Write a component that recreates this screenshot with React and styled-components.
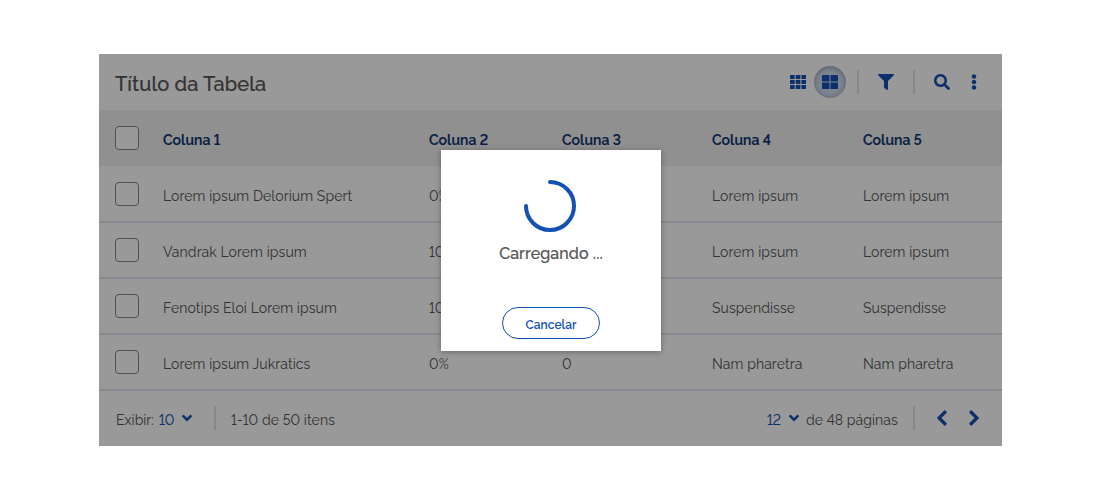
import React from 'react';
import styled, { createGlobalStyle, css } from 'styled-components';
import { FaFilter, FaSearch, FaEllipsisV, FaAngleDown } from 'react-icons/fa';

const GlobalStyle = createGlobalStyle`
  * { box-sizing: border-box; }
  body {
    margin: 0;
    background: #fff;
    color: #555;
    font: 14px/20px Raleway, Lato, "Open Sans", sans-serif;
    font-variant-numeric: lining-nums;
  }
`;

const Page = styled.main`
  height: 500px;
  padding: 54px 98px 54px 99px;
  overflow: hidden;
`;

const Panel = styled.section`
  position: relative;
  height: 392px;
  background: #fff;
`;

const Bar = styled.header`
  display: flex;
  align-items: center;
  height: 56px;
  padding: 0 12px 0 16px;
`;

const Label = styled.span`
  white-space: nowrap;
  letter-spacing: ${(p) => p.$spacing || 0}px;
`;

const Title = styled.h1`
  margin: 4px auto 0 0;
  font-size: 20px;
  font-weight: 500;
  line-height: 28px;
  -webkit-text-stroke: 0.2px currentColor;
`;

const IconButton = styled.button`
  display: flex;
  align-items: center;
  justify-content: center;
  width: 32px;
  height: 32px;
  padding: 0;
  border: 0;
  border-radius: 50%;
  background: none;
  color: #1351b4;
  font-size: 16px;
  ${(p) => p.$active && css`
    background: #d3dff2;
    box-shadow: inset 0 1px 6px rgba(0, 0, 0, 0.32);
  `}
`;

const Glyph = styled.svg`
  width: ${(p) => p.$width || 16}px;
  height: 16px;
  fill: currentColor;
`;

const Divider = styled.span`
  flex: none;
  width: 2px;
  height: 24px;
  margin: ${(p) => p.$margin};
  background: #e3e3e3;
`;

const Row = styled.div`
  display: grid;
  grid-template-columns: 48px 266px 133px 150px 151px 1fr;
  align-items: center;
  height: 56px;
  padding-left: 16px;
  box-shadow: 0 1px #dde5ee, inset 0 -1px #dde5ee;
`;

const HeadRow = styled(Row)`
  background: #f0f0f0;
  box-shadow: none;
  color: #0c326f;
  font-weight: 600;
  -webkit-text-stroke: 0.2px currentColor;
`;

const Checkbox = styled.span`
  width: 24px;
  height: 24px;
  border: 1px solid #888;
  border-radius: 4px;
  background: #fff;
`;

const Cell = styled(Label)`
  padding-top: 4px;
`;

const Footer = styled.footer`
  display: flex;
  align-items: center;
  height: 56px;
  padding: 0 12px 0 17px;
`;

const FooterText = styled(Label)`
  width: ${(p) => p.$width}px;
  padding-top: 4px;
`;

const PageSelect = styled.span`
  display: flex;
  align-items: center;
  justify-content: space-between;
  width: 34px;
  margin-right: ${(p) => p.$gap || 0}px;
  color: #1351b4;
  -webkit-text-stroke: 0.15px currentColor;

  svg { font-size: 16px; margin-right: ${(p) => (p.$gap ? -1 : -2)}px; }
`;

const Spacer = styled.span`
  flex: 1;
`;

const Scrim = styled.div`
  position: absolute;
  inset: 0;
  background: rgba(0, 0, 0, 0.4);
`;

const Dialog = styled.div`
  position: absolute;
  top: 96px;
  left: 342px;
  display: flex;
  flex-direction: column;
  align-items: center;
  width: 220px;
  height: 201px;
  padding-top: 30px;
  background: #fff;
  box-shadow: 0 1px 6px rgba(0, 0, 0, 0.32);
`;

const Spinner = styled.svg`
  display: block;
  width: 52px;
  height: 52px;
  margin-right: 2px;
  fill: none;
  stroke: #1351b4;
  stroke-width: 4;
  stroke-linecap: round;
`;

const Message = styled.p`
  margin: 10px 0 0;
  font-size: 16px;
  font-weight: 500;
  line-height: 24px;
  -webkit-text-stroke: 0.2px currentColor;
`;

const Cancel = styled.button`
  width: 98px;
  height: 32px;
  margin-top: 41px;
  padding: 3px 0 0;
  border: 1px solid #1351b4;
  border-radius: 16px;
  background: #fff;
  color: #1351b4;
  font: 600 12px/16px Raleway, Lato, "Open Sans", sans-serif;
`;

const columns = ['Coluna 1', 'Coluna 2', 'Coluna 3', 'Coluna 4', 'Coluna 5'];

const rows = [
  ['Lorem ipsum Delorium Spert', '0%', '', 'Lorem ipsum', 'Lorem ipsum'],
  ['Vandrak Lorem ipsum', '10%', '', 'Lorem ipsum', 'Lorem ipsum'],
  ['Fenotips Eloi Lorem ipsum', '10%', '', 'Suspendisse', 'Suspendisse'],
  ['Lorem ipsum Jukratics', '0%', '0', 'Nam pharetra', 'Nam pharetra'],
];

const SmallGrid = () => (
  <Glyph viewBox="0 0 16 16">
    {[1, 6, 11].map((y) => [0, 5.7, 11.4].map((x) => (
      <rect key={`${x}-${y}`} x={x} y={y} width="4.7" height="4" rx="0.4" />
    )))}
  </Glyph>
);

const LargeGrid = () => (
  <Glyph viewBox="0 0 16 16">
    <path d="M.7 1h6.8v6.5H0V1.7A.7.7 0 0 1 .7 1zM8.5 1h6.8a.7.7 0 0 1 .7.7v5.8H8.5zM0 8.5h7.5V15H.7a.7.7 0 0 1-.7-.7zM8.5 8.5H16v5.8a.7.7 0 0 1-.7.7H8.5z" />
  </Glyph>
);

const Chevron = ({ right }) => (
  <Glyph $width={10} viewBox="0 0 10 16">
    <path d={right
      ? 'M9.7 8.6 2.8 15.4a.8.8 0 0 1-1.1 0L.5 14.2a.8.8 0 0 1 0-1.1L5.6 8 .5 2.9a.8.8 0 0 1 0-1.1L1.7.6a.8.8 0 0 1 1.1 0l6.9 6.8a.8.8 0 0 1 0 1.2z'
      : 'M.3 7.4 7.2.6a.8.8 0 0 1 1.1 0l1.2 1.2a.8.8 0 0 1 0 1.1L4.4 8l5.1 5.1a.8.8 0 0 1 0 1.1l-1.2 1.2a.8.8 0 0 1-1.1 0L.3 8.6a.8.8 0 0 1 0-1.2z'}
    />
  </Glyph>
);

export default function App() {
  return (
    <Page>
      <GlobalStyle />
      <Panel>
        <Bar>
          <Title><Label $spacing={0.14}>Título da Tabela</Label></Title>
          <IconButton><SmallGrid /></IconButton>
          <IconButton $active><LargeGrid /></IconButton>
          <Divider $margin="0 11px" />
          <IconButton><FaFilter /></IconButton>
          <Divider $margin="0 11px" />
          <IconButton><FaSearch /></IconButton>
          <IconButton><FaEllipsisV /></IconButton>
        </Bar>
        <HeadRow>
          <Checkbox />
          {columns.map((name) => <Cell key={name} $spacing={0.06}>{name}</Cell>)}
        </HeadRow>
        {rows.map((cells) => (
          <Row key={cells[0]}>
            <Checkbox />
            {cells.map((text, i) => <Cell key={i} $spacing={0.09}>{text}</Cell>)}
          </Row>
        ))}
        <Footer>
          <FooterText $width={43}>Exibir:</FooterText>
          <PageSelect><FooterText>10</FooterText><FaAngleDown /></PageSelect>
          <Divider $margin="0 15px 0 21px" />
          <FooterText $spacing={0.08}>1-10 de 50 itens</FooterText>
          <Spacer />
          <PageSelect $gap={5}><FooterText>12</FooterText><FaAngleDown /></PageSelect>
          <FooterText $width={92} $spacing={0.08}>de 48 páginas</FooterText>
          <Divider $margin="0 11px 0 15px" />
          <IconButton><Chevron /></IconButton>
          <IconButton><Chevron right /></IconButton>
        </Footer>
        <Scrim />
        <Dialog>
          <Spinner viewBox="0 0 52 52"><path d="M26 2a24 24 0 1 1-24 24" /></Spinner>
          <Message><Label $spacing={0.1}>Carregando ...</Label></Message>
          <Cancel><Label>Cancelar</Label></Cancel>
        </Dialog>
      </Panel>
    </Page>
  );
}
